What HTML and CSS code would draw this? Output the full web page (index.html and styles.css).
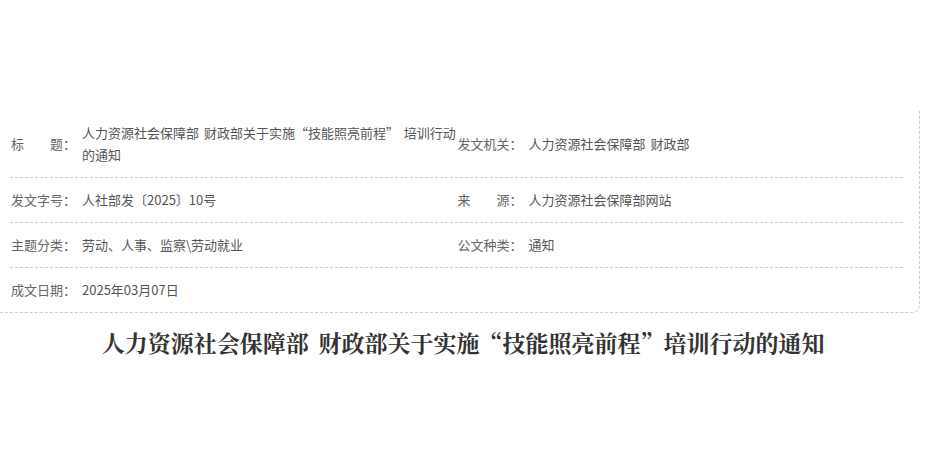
FILE: index.html
```html
<!DOCTYPE html>
<html lang="zh-CN">
    <head>
        <meta charset="utf-8">
        <title>人力资源社会保障部 财政部关于实施“技能照亮前程”培训行动的通知</title>
        <link rel="stylesheet" href="styles.css">
    </head>
    <body>
        <div class="info">
            <div class="row">
                <div class="label">标　　题：</div>
                <div class="value">人力资源社会保障部 财政部关于实施“技能照亮前程” 培训行动的通知</div>
                <div class="label">发文机关：</div>
                <div class="value">人力资源社会保障部 财政部</div>
            </div>
            <div class="row">
                <div class="label">发文字号：</div>
                <div class="value">人社部发〔2025〕10号</div>
                <div class="label">来　　源：</div>
                <div class="value">人力资源社会保障部网站</div>
            </div>
            <div class="row">
                <div class="label">主题分类：</div>
                <div class="value">劳动、人事、监察\劳动就业</div>
                <div class="label">公文种类：</div>
                <div class="value">通知</div>
            </div>
            <div class="row last">
                <div class="label">成文日期：</div>
                <div class="value">2025年03月07日</div>
                <div class="label"></div>
                <div class="value"></div>
            </div>
        </div>
        <h1 class="doc-title">人力资源社会保障部 财政部关于实施“技能照亮前程”培训行动的通知</h1>
    </body>
</html>
```

FILE: styles.css
```css
body {
    margin: 0;
    background: #fff;
    font-family: "Noto Sans CJK SC", sans-serif;
}
.info {
    box-sizing: border-box;
    width: 926px;
    margin: 111px 0 0 -6px;
    padding: 0 16px;
    border: 1px dashed #ccc;
    border-top: none;
    border-left: none;
    border-bottom-right-radius: 8px;
}
.row {
    display: grid;
    grid-template-columns: 72px 1fr 72px 1fr;
    align-items: center;
    padding: 11px 0;
    border-bottom: 1px dashed #ccc;
    font-size: 13px;
    line-height: 22px;
}
.row.last {
    border-bottom: none;
}
.label {
    padding-left: 1px;
    color: #666;
    white-space: nowrap;
}
.value {
    color: #555;
    word-spacing: 2px;
}
.doc-title {
    margin: 15px 0 0;
    font-family: "Noto Serif CJK SC", "Noto Sans CJK SC", serif;
    font-size: 23px;
    line-height: 30px;
    font-weight: bold;
    color: #333;
    text-align: center;
    word-spacing: 4px;
}
```
